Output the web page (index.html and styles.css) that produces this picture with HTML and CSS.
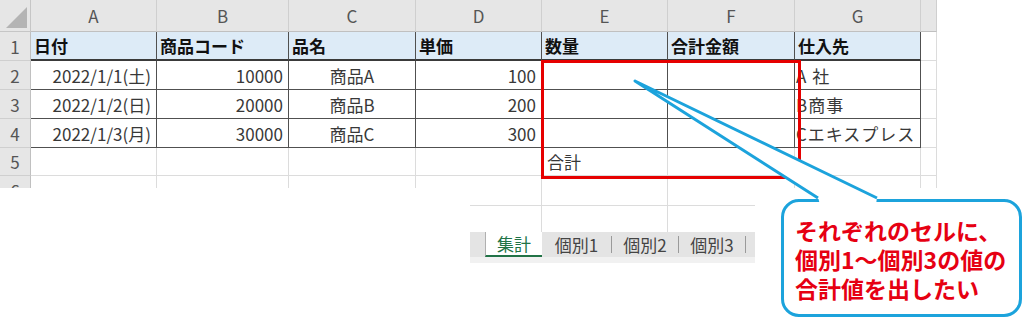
FILE: index.html
```html
<!DOCTYPE html>
<html lang="ja">
<head>
  <meta charset="UTF-8">
  <title>集計シート</title>
  <link rel="stylesheet" href="styles.css">
</head>
<body>
  <div class="page">
    <!-- Worksheet -->
    <div class="sheet">
      <div class="corner"></div>
      <div class="colhd">A</div>
      <div class="colhd">B</div>
      <div class="colhd">C</div>
      <div class="colhd">D</div>
      <div class="colhd">E</div>
      <div class="colhd">F</div>
      <div class="colhd">G</div>
      <div class="colhd"></div>

      <div class="rowhd">1</div>
      <div class="cell hd">日付</div>
      <div class="cell hd">商品コード</div>
      <div class="cell hd">品名</div>
      <div class="cell hd">単価</div>
      <div class="cell hd">数量</div>
      <div class="cell hd">合計金額</div>
      <div class="cell hd">仕入先</div>
      <div class="cell"></div>

      <div class="rowhd">2</div>
      <div class="cell d r">2022/1/1(土)</div>
      <div class="cell d r">10000</div>
      <div class="cell d m">商品A</div>
      <div class="cell d r">100</div>
      <div class="cell d"></div>
      <div class="cell d"></div>
      <div class="cell d tight">A 社</div>
      <div class="cell"></div>

      <div class="rowhd">3</div>
      <div class="cell d r">2022/1/2(日)</div>
      <div class="cell d r">20000</div>
      <div class="cell d m">商品B</div>
      <div class="cell d r">200</div>
      <div class="cell d"></div>
      <div class="cell d"></div>
      <div class="cell d tight">B商事</div>
      <div class="cell"></div>

      <div class="rowhd">4</div>
      <div class="cell d r">2022/1/3(月)</div>
      <div class="cell d r">30000</div>
      <div class="cell d m">商品C</div>
      <div class="cell d r">300</div>
      <div class="cell d"></div>
      <div class="cell d"></div>
      <div class="cell d tight">Cエキスプレス</div>
      <div class="cell"></div>

      <div class="rowhd">5</div>
      <div class="cell"></div>
      <div class="cell"></div>
      <div class="cell"></div>
      <div class="cell"></div>
      <div class="cell">合計</div>
      <div class="cell"></div>
      <div class="cell"></div>
      <div class="cell"></div>

      <div class="rowhd">6</div>
      <div class="cell"></div>
      <div class="cell"></div>
      <div class="cell"></div>
      <div class="cell"></div>
      <div class="cell"></div>
      <div class="cell"></div>
      <div class="cell"></div>
      <div class="cell"></div>
    </div>

    <!-- Sheet tabs snippet -->
    <div class="snippet">
      <div class="snip-grid">
        <div class="snip-cell"></div>
        <div class="snip-cell"></div>
        <div class="snip-cell"></div>
        <div class="snip-cell"></div>
        <div class="snip-cell"></div>
        <div class="snip-cell"></div>
      </div>
      <div class="tabs">
        <div class="tab active">集計</div>
        <div class="tab">個別1</div>
        <div class="tab">個別2</div>
        <div class="tab">個別3</div>
      </div>
      <div class="tabs-foot"></div>
    </div>

    <!-- Annotations -->
    <div class="red-box"></div>
    <div class="bubble">
      <p>それぞれのセルに、</p>
      <p>個別1～個別3の値の</p>
      <p>合計値を出したい</p>
    </div>
    <svg class="tail" width="1024" height="319" viewBox="0 0 1024 319">
      <polygon points="635,81 818,197 820,205 876,205 877,197" fill="#fff"/>
      <polyline points="818,198 635,81 877,198" fill="none" stroke="#1ca3dc" stroke-width="3" stroke-linejoin="round"/>
    </svg>
  </div>
</body>
</html>
```

FILE: styles.css
```css
* {
  margin: 0;
  padding: 0;
  box-sizing: border-box;
}

body {
  font-family: "Noto Sans CJK JP", "Noto Sans", sans-serif;
  background: #fff;
  color: #383838;
}

.page {
  position: relative;
  width: 1024px;
  height: 319px;
  overflow: hidden;
}

/* Worksheet */
.sheet {
  display: grid;
  grid-template-columns: 31px 126px 132px 127px 126px 126px 127px 126px 16px;
  grid-template-rows: 32px 29px 29px 29px 29px 28px 29px;
  width: 937px;
  height: 188px;
  overflow: hidden;
  font-size: 17px;
  line-height: 1;
}

.corner,
.colhd,
.rowhd {
  background: #e6e6e6;
  color: #555;
  display: flex;
  align-items: center;
  justify-content: center;
}

.corner {
  position: relative;
  border-right: 1px solid #c6c6c6;
  border-bottom: 1px solid #c6c6c6;
}

.corner::after {
  content: "";
  position: absolute;
  right: 3px;
  bottom: 3px;
  width: 21px;
  height: 21px;
  background: #b4b4b4;
  clip-path: polygon(100% 0, 100% 100%, 0 100%);
}

.colhd {
  font-size: 17px;
  border-right: 1px solid #cfcfcf;
  border-bottom: 1px solid #c0c0c0;
}

.rowhd {
  font-size: 17px;
  border-right: 1px solid #c0c0c0;
  border-bottom: 1px solid #cfcfcf;
}

.cell {
  display: flex;
  align-items: center;
  padding: 0 5px;
  white-space: nowrap;
  border-right: 1px solid #dcdcdc;
  border-bottom: 1px solid #dcdcdc;
}

.cell.hd {
  background: #ddebf7;
  color: #111;
  font-weight: bold;
  border-right: 1px solid #505050;
  border-bottom: 2px solid #3a3a3a;
  padding-left: 3px;
}

.cell.d {
  border-right: 1px solid #505050;
  border-bottom: 1px solid #505050;
}

.cell.r {
  justify-content: flex-end;
}

.cell.m {
  justify-content: center;
}

.cell.tight {
  padding-left: 1px;
  letter-spacing: 1px;
}

/* Sheet tab snippet */
.snippet {
  margin-left: 470px;
  width: 285px;
}

.snip-grid {
  display: grid;
  grid-template-columns: 72px 126px 87px;
  grid-template-rows: 18px 26px;
}

.snip-cell {
  border-right: 1px solid #dcdcdc;
  border-bottom: 1px solid #dcdcdc;
}

.snip-cell:nth-child(3n) {
  border-right: none;
}

.snip-cell:nth-child(n+4) {
  border-bottom: none;
}

.tabs {
  display: flex;
  height: 25px;
  padding-left: 15px;
  background: #e4e4e4;
  font-size: 17px;
  line-height: 1;
  color: #444;
}

.tab {
  display: flex;
  align-items: center;
  justify-content: center;
  width: 67px;
  margin: 4px 0;
  border-right: 1px solid #9a9a9a;
}

.tab.active {
  width: 57px;
  margin: 0;
  background: #fff;
  color: #217346;
  border-left: 1px solid #b0b0b0;
  border-right: none;
  border-bottom: 2px solid #217346;
}

.tab:nth-child(2) {
  width: 70px;
}

.tabs-foot {
  height: 6px;
  background: #f1f1f1;
}

/* Annotations */
.red-box {
  position: absolute;
  left: 541px;
  top: 60px;
  width: 260px;
  height: 119px;
  border: 3px solid #e60000;
}

.bubble {
  position: absolute;
  left: 781px;
  top: 199px;
  width: 241px;
  height: 118px;
  padding: 14px 0 0 11px;
  border: 3px solid #1ca3dc;
  border-radius: 18px;
  background: #fff;
  color: #e60012;
  font-size: 23px;
  font-weight: bold;
  white-space: nowrap;
}

.bubble p {
  height: 29px;
  line-height: 29px;
}

.tail {
  position: absolute;
  left: 0;
  top: 0;
  pointer-events: none;
}
```
